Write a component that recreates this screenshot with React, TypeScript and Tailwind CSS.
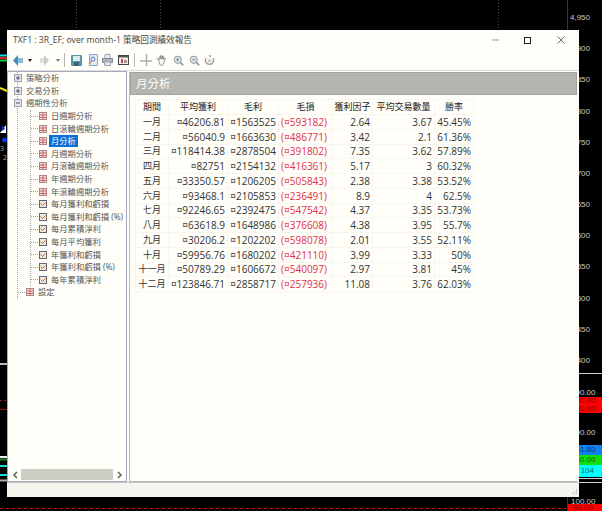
import { ReactNode } from 'react';

const FONT = "font-['Open_Sans','Noto_Sans_CJK_TC',sans-serif]";

const ROWS = [
  ['一月', '¤46206.81', '¤1563525', '(¤593182)', '2.64', '3.67', '45.45%'],
  ['二月', '¤56040.9', '¤1663630', '(¤486771)', '3.42', '2.1', '61.36%'],
  ['三月', '¤118414.38', '¤2878504', '(¤391802)', '7.35', '3.62', '57.89%'],
  ['四月', '¤82751', '¤2154132', '(¤416361)', '5.17', '3', '60.32%'],
  ['五月', '¤33350.57', '¤1206205', '(¤505843)', '2.38', '3.38', '53.52%'],
  ['六月', '¤93468.1', '¤2105853', '(¤236491)', '8.9', '4', '62.5%'],
  ['七月', '¤92246.65', '¤2392475', '(¤547542)', '4.37', '3.35', '53.73%'],
  ['八月', '¤63618.9', '¤1648986', '(¤376608)', '4.38', '3.95', '55.7%'],
  ['九月', '¤30206.2', '¤1202202', '(¤598078)', '2.01', '3.55', '52.11%'],
  ['十月', '¤59956.76', '¤1680202', '(¤421110)', '3.99', '3.33', '50%'],
  ['十一月', '¤50789.29', '¤1606672', '(¤540097)', '2.97', '3.81', '45%'],
  ['十二月', '¤123846.71', '¤2858717', '(¤257936)', '11.08', '3.76', '62.03%'],
];

const HEADERS = ['期間', '平均獲利', '毛利', '毛損', '獲利因子', '平均交易數量', '勝率'];

const TABLE_ITEMS = ['日週期分析', '日滾輪週期分析', '月分析', '月週期分析', '月滾輪週期分析', '年週期分析', '年滾輪週期分析'];
const CHART_ITEMS = ['每月獲利和虧損', '每月獲利和虧損 (%)', '每月累積淨利', '每月平均獲利', '年獲利和虧損', '年獲利和虧損 (%)', '每年累積淨利'];

const SCALE = ['4,950', '900', '850', '800', '750', '700', '650', '600', '550', '500', '450', '400'];

function PlusBox({ minus }: { minus?: boolean }) {
  return (
    <svg width="8" height="8" viewBox="0 0 8 8" className="shrink-0 -ml-[4px]">
      <rect x="0.5" y="0.5" width="7" height="7" fill="#e4e6ee" stroke="#a0a0b4" />
      <path d="M2 4h4" stroke="#555" />
      {!minus && <path d="M4 2v4" stroke="#555" />}
    </svg>
  );
}

function TableIcon() {
  return (
    <svg width="8" height="8" viewBox="0 0 8 8" className="shrink-0">
      <rect x="0.5" y="0.5" width="7" height="7" fill="#f4dcdc" stroke="#a88" />
      <path d="M1 3h6M1 5.500h6M4 1v6" stroke="#c66" />
    </svg>
  );
}

function ChartIcon() {
  return (
    <svg width="8" height="8" viewBox="0 0 8 8" className="shrink-0">
      <rect x="0.5" y="0.5" width="7" height="7" fill="#efeadc" stroke="#667" />
      <path d="M1.500 3.500l2 2 3-3" stroke="#d2691e" fill="none" />
    </svg>
  );
}

function TreeRow({ children, icon, selected }: { children: ReactNode; icon: ReactNode; selected?: boolean }) {
  return (
    <div className="flex items-center h-[12.6px] whitespace-nowrap">
      <div className="w-[7px] shrink-0 mr-[1px] border-t border-dotted border-gray-400" />
      {icon}
      <span className={`leading-[12px] ${selected ? 'ml-[2px] px-[2px] bg-[#0a6fd6] text-white' : 'ml-[4px]'}`}>
        {children}
      </span>
    </div>
  );
}

function RootRow({ label, minus }: { label: string; minus?: boolean }) {
  return (
    <div className="flex items-center h-[12.6px] whitespace-nowrap">
      <PlusBox minus={minus} />
      <span className="ml-[4px] leading-[12px]">{label}</span>
    </div>
  );
}

function Separator({ className }: { className: string }) {
  return <div className={`w-px h-[14px] bg-[#b8b8b0] ${className}`} />;
}

function Toolbar() {
  return (
    <div className="flex items-center h-[20px] shrink-0 pl-[6px]">
      <svg width="10" height="11" viewBox="0 0 10 11">
        <path d="M5 0L0 5.500 5 11z" fill="#3a8fbc" />
        <path d="M5 3h5v5H5z" fill="#8cbcd4" />
      </svg>
      <span className="ml-[5px] w-0 h-0 border-x-[2px] border-x-transparent border-t-[3px] border-t-[#222]" />
      <svg width="9" height="11" viewBox="0 0 9 11" className="ml-[8px]">
        <path d="M4 0l5 5.500L4 11z" fill="#c8ccc8" />
        <path d="M0 3h4v5H0z" fill="#dcdfdc" />
      </svg>
      <span className="ml-[7px] w-0 h-0 border-x-[2px] border-x-transparent border-t-[3px] border-t-[#777]" />
      <Separator className="ml-[4px]" />
      <svg width="11" height="11" viewBox="0 0 11 11" className="ml-[6px]">
        <rect width="11" height="11" rx="1" fill="#5f93a6" />
        <rect x="2" y="1" width="7" height="5" fill="#d8ecf0" />
        <rect x="3" y="7" width="5" height="4" fill="#3a6678" />
      </svg>
      <svg width="10" height="12" viewBox="0 0 10 12" className="ml-[6px]">
        <path d="M1.500.5h8v11h-8z" fill="#e4ecfa" stroke="#8aa4d4" />
        <circle cx="5" cy="5" r="2" fill="none" stroke="#5a7cbc" />
        <path d="M3.500 7L1 10.500" stroke="#c96" strokeWidth="1.400" />
      </svg>
      <svg width="11" height="12" viewBox="0 0 11 12" className="ml-[4px]">
        <path d="M3 .5h5v4H3z" fill="#eef0f4" stroke="#98a4b4" />
        <path d="M.5 4.500h10v4H.5z" fill="#aeb6be" stroke="#7c8690" />
        <path d="M2.500 8h6v3.500h-6z" fill="#e8eaec" stroke="#98a4b4" />
      </svg>
      <svg width="11" height="10" viewBox="0 0 11 10" className="ml-[5px]">
        <rect x="0.5" y="0.5" width="10" height="9" fill="#f4f0e8" stroke="#444" />
        <rect x="1" y="1" width="9" height="1.500" fill="#555" />
        <path d="M3 4h2v4H3z" fill="#c44" />
        <path d="M6 5h3v3H6z" fill="#999" />
      </svg>
      <Separator className="ml-[5px]" />
      <svg width="12" height="12" viewBox="0 0 12 12" className="ml-[5px]">
        <path d="M6.500 0v12M0 7h12" stroke="#a8aeae" strokeWidth="1.400" />
      </svg>
      <svg width="12" height="13" viewBox="0 0 16 16" className="ml-[4px]">
        <path d="M4 9L2 6c-.6-1 .6-1.600 1.300-.8L5 7V2.800c0-1 1.300-1 1.400 0V6l.4-4.200c.1-1 1.400-.9 1.400 0V6l.6-3.300c.2-1 1.400-.8 1.300.2L9.800 7l1.300-2c.6-.8 1.700-.3 1.300.6L10.500 11c-.6 2-1.500 3.500-3.500 3.500S4.800 12 4 9z" fill="#f8f8f4" stroke="#777" />
      </svg>
      <svg width="11" height="11" viewBox="0 0 14 14" className="ml-[5px]">
        <circle cx="6" cy="6" r="4.500" fill="#dce4e4" stroke="#98a2a2" strokeWidth="1.300" />
        <path d="M9.500 9.500l3.500 3.500" stroke="#808a8a" strokeWidth="2" />
        <path d="M4 6h4M6 4v4" stroke="#778" />
      </svg>
      <svg width="11" height="11" viewBox="0 0 14 14" className="ml-[5px]">
        <circle cx="6" cy="6" r="4.500" fill="#dce4e4" stroke="#98a2a2" strokeWidth="1.300" />
        <path d="M9.500 9.500l3.500 3.500" stroke="#808a8a" strokeWidth="2" />
        <path d="M4 6h4" stroke="#778" />
      </svg>
      <svg width="11" height="12" viewBox="0 0 13 14" className="ml-[4px]">
        <path d="M2 5a5 5 0 1 0 9 0" fill="#eef0ea" stroke="#949a9a" strokeWidth="1.400" />
        <path d="M5 2l3-1v3z" fill="#949a9a" />
        <circle cx="6.500" cy="8" r="1.500" fill="#b8bcb8" />
      </svg>
    </div>
  );
}

function ReportTable() {
  return (
    <table className="mt-[4px] ml-[5px] w-[338px] table-fixed border-collapse text-[10px] text-[#333]">
      <colgroup>
        <col className="w-[33px]" />
        <col className="w-[59px]" />
        <col className="w-[51px]" />
        <col className="w-[54px]" />
        <col className="w-[40px]" />
        <col className="w-[62px]" />
        <col className="w-[39px]" />
      </colgroup>
      <thead>
        <tr className="h-[15px]">
          {HEADERS.map(h => (
            <th key={h} className="p-0 border border-[#f6f7ee] font-normal text-center text-[9px] leading-[12px] whitespace-nowrap text-[#222]">
              {h}
            </th>
          ))}
        </tr>
      </thead>
      <tbody>
        {ROWS.map(row => (
          <tr key={row[0]} className="h-[14.75px]">
            {row.map((cell, i) => (
              <td
                key={i}
                className={`p-0 border border-[#f6f7ee] leading-[12px] whitespace-nowrap ${
                  i === 0 ? 'text-center text-[9px]' : 'text-right'
                } ${i === 3 ? 'text-[#e0304c] pr-[5px]' : i > 0 ? 'pr-[2px]' : ''}`}
              >
                {cell}
              </td>
            ))}
          </tr>
        ))}
      </tbody>
    </table>
  );
}

function ChartBackdrop() {
  return (
    <svg width="602" height="511" viewBox="0 0 602 511" className="absolute inset-0">
      <path d="M76.500 0v30M160.500 0v30M498.500 0v30" stroke="#4a4a4a" strokeDasharray="1 2" />
      <path d="M567.500 0v30M567.500 497v14" stroke="#8a1414" />
      <path d="M0 508.500h566" stroke="#c01010" strokeDasharray="3 3" />
      <path d="M0 55.500h7" stroke="#18d8d8" strokeWidth="2" />
      <path d="M0 58h7" stroke="#e02020" strokeWidth="2" />
      <path d="M0 60.500h7" stroke="#20c040" strokeWidth="2" />
      <path d="M0 88l7 3" stroke="#e8e020" strokeWidth="2" />
      <path d="M0 133l6-8v8z" fill="#fff" />
      <path d="M2 125l3 4-3 2z" fill="#1030e0" />
      <circle cx="4.500" cy="140" r="2.500" fill="#1030e0" />
      <text x="0" y="151" fontSize="7" fill="#aaa">3</text>
      <text x="3" y="160" fontSize="7" fill="#aaa">2</text>
      <path d="M0 364h7" stroke="#bbb" strokeWidth="2" />
      <path d="M0 400.500h7" stroke="#b01010" strokeDasharray="2 2" />
      <path d="M0 409.500h7" stroke="#a01010" />
      <path d="M0 457h7" stroke="#f0f0f0" strokeWidth="2" />
      <path d="M0 459.500h7" stroke="#208030" strokeWidth="2" />
      <path d="M0 466h7M0 475h7" stroke="#18d8d8" strokeWidth="2" />
      <path d="M0 480.500h7" stroke="#aaa" strokeWidth="2" />
      <path d="M579 373.500h23M579 478.500h23M579 482.500h23" stroke="#ccc" />
    </svg>
  );
}

function PriceAxis() {
  return (
    <div className="absolute left-[568px] top-0 w-[34px] h-full pt-[2.4px] flex flex-col font-['Liberation_Sans',sans-serif] text-[8px] text-[#c8c8c8]">
      {SCALE.map(label => (
        <div key={label} className="h-[31.2px] shrink-0 flex items-center justify-end w-[22px]">
          {label}
        </div>
      ))}
      <div className="h-[8px] shrink-0 mt-[12.4px] pl-[3px] leading-[8px]">100.00</div>
      <div className="h-[16px] shrink-0 pl-[3px] bg-[#ff0000] text-[#8a0000] leading-[8px]">
        <div>100.00</div>
        <div>100.00</div>
      </div>
      <div className="h-[12px] shrink-0 mt-[14px] pl-[3px] leading-[12px]">100.00</div>
      <div className="h-[10px] shrink-0 mt-[6px] pl-[3px] bg-[#1080f0] text-[#103070] leading-[10px]">101.80</div>
      <div className="h-[10px] shrink-0 pl-[3px] bg-[#10e010] text-[#0a6a0a] leading-[10px]">100.00</div>
      <div className="h-[12px] shrink-0 pl-[3px] bg-[#00ffff] text-[#106a6a] leading-[12px] text-right pr-[8px]">104</div>
      <div className="h-[6px] shrink-0 mt-[21px] pl-[3px] leading-[8px]">100.00</div>
      <div className="h-[7px] shrink-0 pl-[5px] bg-[#ff0000] text-[#8a0000] leading-[7px]">90.00</div>
    </div>
  );
}

export default function App() {
  return (
    <div className={`relative w-[602px] h-[511px] bg-black overflow-hidden ${FONT}`}>
      <ChartBackdrop />
      <PriceAxis />

      {/* report window */}
      <div className="absolute left-[7px] top-[30px] w-[572px] h-[467px] flex flex-col bg-[#fffef8]">
        <div className="flex items-center h-[20px] shrink-0 pl-[6px] text-[8.6px] text-[#444]">
          <span className="flex-1 truncate">TXF1 : 3R_EF; over month-1 策略回測績效報告</span>
          <svg width="7" height="2" viewBox="0 0 7 2" className="mr-[25px]"><path d="M0 1h7" stroke="#999" /></svg>
          <div className="w-[7px] h-[7px] border border-[#222] mr-[26px]" />
          <svg width="8" height="8" viewBox="0 0 8 8" className="mr-[14px]"><path d="M.5.5l7 7M7.500.5l-7 7" stroke="#666" /></svg>
        </div>
        <Toolbar />
        <div className="flex flex-1 min-h-0 border-t border-[#dcdcd4]">
          <div className="w-[120px] shrink-0 flex flex-col border border-[#a8a8c0] text-[8.3px] text-[#555]">
            <div className="flex-1 overflow-hidden">
              <div className="ml-[9px] border-l border-dotted border-gray-400">
                <RootRow label="策略分析" />
                <RootRow label="交易分析" />
                <RootRow label="週期性分析" minus />
                <div className="ml-[12px] border-l border-dotted border-gray-400">
                  {TABLE_ITEMS.map(item => (
                    <TreeRow key={item} icon={<TableIcon />} selected={item === '月分析'}>
                      {item}
                    </TreeRow>
                  ))}
                  {CHART_ITEMS.map(item => (
                    <TreeRow key={item} icon={<ChartIcon />}>
                      {item}
                    </TreeRow>
                  ))}
                </div>
                <TreeRow icon={<TableIcon />}>設定</TreeRow>
              </div>
            </div>
            <div className="flex items-center h-[11px] mb-[1px]">
              <svg width="6" height="8" viewBox="0 0 6 8" className="ml-[4px]"><path d="M5 1L2 4l3 3" fill="none" stroke="#666" strokeWidth="1.600" /></svg>
              <div className="ml-[3px] w-[92px] h-[11px] bg-[#cccec4]" />
              <svg width="6" height="8" viewBox="0 0 6 8" className="ml-[4px]"><path d="M1 1l3 3-3 3" fill="none" stroke="#666" strokeWidth="1.600" /></svg>
            </div>
          </div>
          <div className="flex-1 ml-[2px] mt-[1px] mr-[2px] flex flex-col border-l border-b border-[#b8b8b4] min-w-0">
            <div className="h-[23px] shrink-0 flex items-center pl-[5px] bg-[#b3b6ae] border border-[#a2a49c] text-[11.5px] text-white">
              月分析
            </div>
            <ReportTable />
          </div>
        </div>
        <div className="flex items-end justify-end h-[15px] shrink-0 bg-[#f4f6f0] border-t border-[#c4c4bc] pr-px pb-px">
          <svg width="8" height="8" viewBox="0 0 8 8">
            <path d="M6 1h1v1H6zM4 3h1v1H4zM6 3h1v1H6zM2 5h1v1H2zM4 5h1v1H4zM6 5h1v1H6z" fill="#aaa" />
          </svg>
        </div>
      </div>
    </div>
  );
}
